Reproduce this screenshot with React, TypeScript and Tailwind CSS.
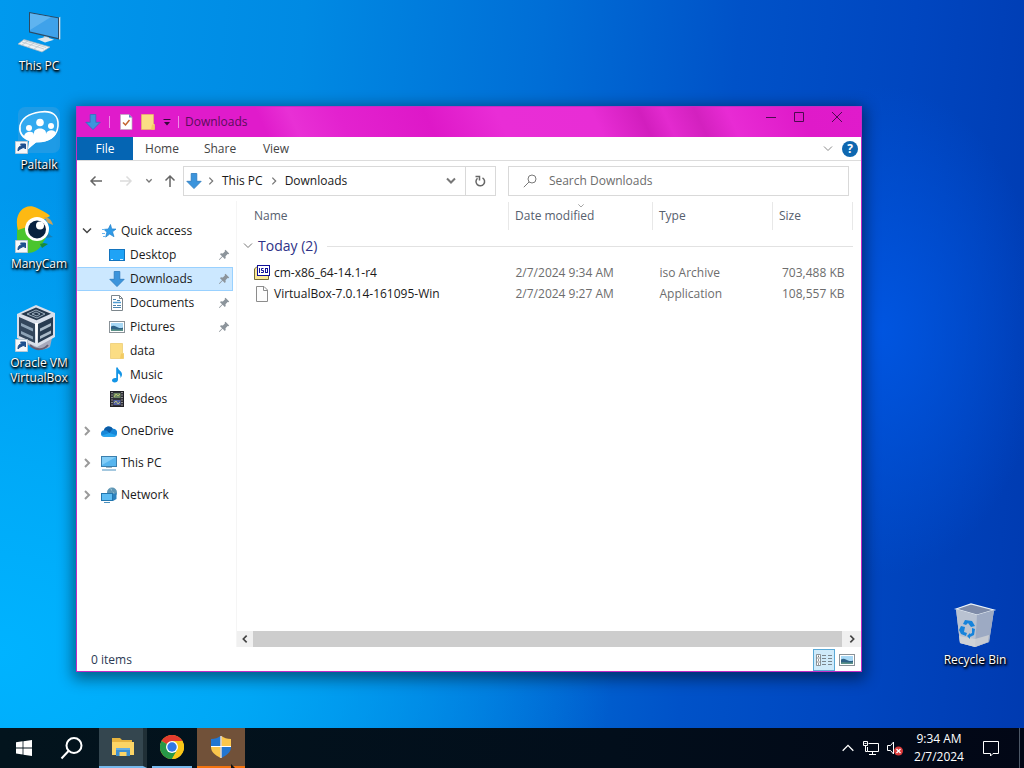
import type { ReactNode } from "react";

type IconProps = { className?: string };

/* ---------- small glyphs ---------- */

function Chevron({ dir, className = "" }: { dir: "down" | "right" | "left" | "up"; className?: string }) {
  const d = {
    down: "M2 3.5 6 7.5 10 3.5",
    right: "M4 2 8 6 4 10",
    left: "M8 2 4 6 8 10",
    up: "M2 8 6 4 10 8",
  }[dir];
  return (
    <svg viewBox="0 0 12 12" fill="none" stroke="currentColor" className={className}>
      <path d={d} />
    </svg>
  );
}

function DownloadArrow({ className = "" }: IconProps) {
  return (
    <svg viewBox="0 0 16 16" className={className}>
      <path d="M5.2.5h5.6v7.8h4.4L8 15.6.8 8.3h4.4z" fill="#3b94dc" stroke="#2878bd" strokeWidth=".8" />
    </svg>
  );
}

function FolderIcon({ className = "" }: IconProps) {
  return (
    <svg viewBox="0 0 16 16" className={className}>
      <path d="M1.5.5h12v9l1 1v5h-13z" fill="#fbdd84" stroke="#e8c35c" strokeWidth=".6" />
      <path d="M12 10.5h2.5v5H11z" fill="#f3cb62" />
    </svg>
  );
}

function CheckPageIcon({ className = "" }: IconProps) {
  return (
    <svg viewBox="0 0 16 16" className={className}>
      <path d="M2.5.5h8.5l3 3v12H2.500z" fill="#fff" stroke="#b9b0bd" strokeWidth=".7" />
      <path d="M11 .5v3h3z" fill="#5b86c4" />
      <path d="m5 8.500 2.500 2.500 4-5" fill="none" stroke="#c4642d" strokeWidth="1.500" />
    </svg>
  );
}

function StarIcon({ className = "" }: IconProps) {
  return (
    <svg viewBox="0 0 16 16" className={className}>
      <path d="m9.500 1.500 1.200 4.400 4.300.2-3.500 2.700 1.500 4.900-4.300-2.600-4 3 1.200-4.900L3 6.400l4.300-.4z" fill="#2f9be8" stroke="#1f7fca" strokeWidth=".7" />
      <path d="M1 6.500h3M1 10.500h3M2 13.500h2" stroke="#6bb6ee" />
    </svg>
  );
}

function DesktopIcon({ className = "" }: IconProps) {
  return (
    <svg viewBox="0 0 16 16" className={className}>
      <rect x=".5" y="2.500" width="15" height="11" fill="#1fa3f6" stroke="#1374be" />
      <path d="M2 12.500h2M11 12.500h3" stroke="#d6efff" />
    </svg>
  );
}

function DocumentIcon({ className = "" }: IconProps) {
  return (
    <svg viewBox="0 0 16 16" className={className}>
      <path d="M2.500.5h8l3 3v12h-11z" fill="#fff" stroke="#7d868c" />
      <path d="M10.500.5v3h3" fill="none" stroke="#7d868c" />
      <path d="M4 4.500h3M8 5.500h3M4 10.500h3M4 12.500h8M8 10.500h4" stroke="#4b84ae" />
      <path d="M4 7.500h8" stroke="#4f9bd0" strokeWidth="1.500" />
    </svg>
  );
}

function PictureIcon({ className = "" }: IconProps) {
  return (
    <svg viewBox="0 0 16 16" className={className}>
      <rect x=".5" y="2.500" width="15" height="11" fill="#fff" stroke="#8a9298" />
      <path d="M2 4h12v8H2z" fill="#a8d8f5" />
      <path d="M2 7.500c3-2 5 0 7 1s4 .5 5 0V12H2z" fill="#2f6286" />
      <path d="M2 10.500c4-1 8 1 12-.5V12H2z" fill="#5c9389" />
    </svg>
  );
}

function MusicIcon({ className = "" }: IconProps) {
  return (
    <svg viewBox="0 0 16 16" className={className}>
      <path d="M7.200.5h1.600c.3 3 4.200 3.500 4.200 7 0 1.600-.8 2.700-1.600 3.500.5-2.700-.8-4-2.400-4.500v6c0 1.900-1.500 3-3.300 3S3 14.600 3 13.300c0-1.600 1.900-2.800 4.200-2.300z" fill="#1495e6" />
    </svg>
  );
}

function VideoIcon({ className = "" }: IconProps) {
  return (
    <svg viewBox="0 0 16 16" className={className}>
      <rect x="1.500" y=".5" width="13" height="15" fill="#303138" stroke="#202025" />
      <path d="M3 1v14M13 1v14" stroke="#e6e6e0" strokeDasharray="1 1.500" />
      <path d="M4.500 2h7v5h-7z" fill="#6d8763" />
      <path d="M4.500 9h7v5h-7z" fill="#5764a5" />
      <path d="m5 6 2-3 2 2 2-2M5 12l2-2 2 3 2-2" fill="none" stroke="#c9cf72" strokeWidth=".8" />
    </svg>
  );
}

function OneDriveIcon({ className = "" }: IconProps) {
  return (
    <svg viewBox="0 0 16 16" className={className}>
      <path d="M0 10.500A3.300 3.300 0 0 1 3 7.200 4.800 4.800 0 0 1 11.800 5.800 3.800 3.800 0 0 1 16 10.500a3.200 3.200 0 0 1-2.800 3.300H3.200A3.300 3.300 0 0 1 0 10.500" fill="#1787d8" />
      <path d="M3 7.200A4.800 4.800 0 0 1 11.800 5.800L8.500 10 5.500 7.600z" fill="#0c5ca6" />
      <path d="m8.500 10 7 2.300a3.200 3.200 0 0 1-2.300 1.500H3.200c-1 0-2-.5-2.500-1.200z" fill="#25a5ef" />
    </svg>
  );
}

function MonitorIcon({ className = "" }: IconProps) {
  return (
    <svg viewBox="0 0 16 16" className={className}>
      <rect x=".5" y="1.500" width="15" height="10" fill="#57b5ee" stroke="#3b7fad" />
      <path d="M1 2h14L1 10z" fill="#83cdf7" />
      <path d="M5 12.500h6" stroke="#9fb4c1" />
      <path d="M1 15h14" stroke="#4b91bf" />
    </svg>
  );
}

function NetworkIcon({ className = "" }: IconProps) {
  return (
    <svg viewBox="0 0 16 16" className={className}>
      <circle cx="11" cy="5.500" r="5" fill="#5f96b5" />
      <path d="M9 1.500c3 0 1 2.500 3 3.500s1 2 2 3z" fill="#a9cfdc" />
      <path d="m12 7 3.500-1v6L12 14z" fill="#2c81bd" />
      <rect x=".5" y="6.500" width="11" height="7" fill="#5dbcf3" stroke="#2376ae" />
      <path d="M3 15.500h6" stroke="#4b91bf" />
    </svg>
  );
}

function PinIcon({ className = "" }: IconProps) {
  return (
    <svg viewBox="0 0 12 12" className={className}>
      <path d="M7.500.8 11.200 4.500l-.8.800-.8-.2L7.500 7.200l.2 1.900-.9.900-2.200-2.300L1.500 11l-.6-.5 3.200-3.200L2 5.200l.9-.9 1.900.2L6.900 2.400l-.2-.8z" fill="#8c949b" />
    </svg>
  );
}

function IsoIcon({ className = "" }: IconProps) {
  return (
    <svg viewBox="0 0 16 16" className={className}>
      <path d="M.5 4 2.500 2H5v8.500h9.500v4H.5z" fill="#fbe894" stroke="#736a3b" />
      <rect x="3.500" y=".5" width="12" height="10" fill="#fff" stroke="#10109a" />
      <path d="M5.500 3v5M9.500 3.500H7.500v2h2v2h-2.500" fill="none" stroke="#10109a" />
      <rect x="11.500" y="3.500" width="2" height="4" fill="none" stroke="#10109a" />
    </svg>
  );
}

function BlankFileIcon({ className = "" }: IconProps) {
  return (
    <svg viewBox="0 0 16 16" className={className}>
      <path d="M2.500.5H10L13.500 4v11.500h-11z" fill="#fdfdfd" stroke="#8c8c8c" />
      <path d="M9.500.5v4h4" fill="none" stroke="#8c8c8c" />
    </svg>
  );
}

function DetailsViewIcon({ className = "" }: IconProps) {
  return (
    <svg viewBox="0 0 18 14" className={className}>
      <path d="M1.500 1.500h4v11h-4zM1.500 5h4M1.500 9h4" fill="#fff" stroke="#737b80" strokeWidth=".8" />
      <path d="M3 3.200h1M3 7h1M3 11h1" stroke="#333" />
      <path d="M7 2.500h4M13 2.500h4M7 5.500h4M13 5.500h4M7 8.500h4M13 8.500h4M7 11.500h4M13 11.500h4" stroke="#7b868e" />
    </svg>
  );
}

/* ---------- desktop drawings ---------- */

function ShortcutBadge() {
  return (
    <g>
      <path d="M.5 34.500h12v12H.5z" fill="#f6f8fa" stroke="#b9c8d4" />
      <path d="M3 44c0-4 1.500-5 4-5.300L5.500 37H10.500v5L9 40.500C6.500 41 5 42 3 44" fill="#1c4f8e" stroke="#1c4f8e" />
    </g>
  );
}

function ThisPcDrawing() {
  return (
    <svg viewBox="0 0 48 48" className="h-12 w-12">
      <path d="M14 4 44 9.500v22L14 24.500z" fill="#2c4a63" />
      <path d="M15 5.200 43 10.300v19.800L15 23.500z" fill="#3fa2ea" />
      <path d="M15 5.200 36 9 15 22z" fill="#74c0f3" opacity=".6" />
      <path d="m44 9.500 1.300-.7v22.400l-1.300.3z" fill="#d9e0e4" />
      <path d="m29 28 5 1.200v3.300l-6-1.500z" fill="#aab6bf" />
      <path d="m22 31 9-2 8 2.800-9 2.700z" fill="#dfe7ec" />
      <path d="m9 31.500 26 7.500-8 5L3 36z" fill="#eef2f4" stroke="#a5b5c0" strokeWidth=".7" />
      <path d="m7 34 22 7M9 32.500l22 7M13 33l-6 4M19 35l-6 4M25 37l-6 4" stroke="#b6c3cc" strokeWidth=".7" />
    </svg>
  );
}

function PaltalkDrawing() {
  return (
    <svg viewBox="0 0 48 48" className="h-12 w-12">
      <rect x="3" width="42" height="46" rx="7" fill="#1e9be6" />
      <path d="M25 5C38 3 44 9 43 19c-1 11-10 16-22 15.500l-7 6 1-7C8 31 4 26 5 19 7 10 15 6.500 25 5z" fill="#33aaf0" stroke="#fff" strokeWidth="1.600" />
      <g fill="#fff">
        <circle cx="14" cy="21" r="3" />
        <circle cx="25" cy="15.500" r="3.800" />
        <circle cx="36" cy="19" r="3" />
        <path d="M9 30c0-6 10-7 10-2v-2c0-6 12-6 12 0v1c1-5 10-5 10 0-3 5-9 8-20 8.500l-7 5 1-7c-3-1-5-2-6-3.500" />
      </g>
      <ShortcutBadge />
    </svg>
  );
}

function ManyCamDrawing() {
  return (
    <svg viewBox="0 0 48 48" className="h-12 w-12">
      <path d="M2 16v22c0 12 20 12 25 0l7-11z" fill="#4ac52e" />
      <path d="m25 38 4-1 4 1-6 4z" fill="#198b3a" />
      <path d="M3 24C-2 7 10-4 22 2c5 3 11 5 13 8l-14 8z" fill="#fdb913" />
      <path d="M29 11c5 0 8 4 9 8l-5-2z" fill="#c9a35a" />
      <path d="M31 25c3 2 4 5 7 6l-7 1z" fill="#197eb0" />
      <circle cx="22" cy="23" r="12" fill="#fff" />
      <circle cx="22" cy="23.500" r="9" fill="#08213f" />
      <circle cx="25" cy="19.500" r="4" fill="#fff" />
      <ShortcutBadge />
    </svg>
  );
}

function VirtualBoxDrawing() {
  return (
    <svg viewBox="0 0 48 48" className="h-12 w-12">
      <path d="M12 38c4 6 14 9 23 4l2-9H12z" fill="#a7a9bc" />
      <path d="M15 40c6 6 14 5 18 0" fill="none" stroke="#665f74" strokeWidth="2" />
      <path d="M21 0 40 8v24L22 42 2 33V9z" fill="#d9dfea" />
      <path d="m21 2.500 15 6.200-14.500 6.600L6 9z" fill="#26384c" />
      <path d="m12 9 9-4 9 4-8 4zM17 9l4-2 4 2-3 2z" fill="none" stroke="#9aacbc" />
      <path d="m4 12 16 7v19L4 31z" fill="#33465c" />
      <path d="m23 19 15-7v18l-15 8z" fill="#283b50" />
      <path d="m6 18 12 5.500v3L6 21zM6 26l12 5.500v3L6 29z" fill="#8ea3b7" />
      <path d="m25 23.500 11-5.500v3l-11 5.500zM25 31l11-5.500v3L25 34z" fill="#a9b9c7" />
      <path d="m20 18 1.500 23 1.500-23z" fill="#fff" />
      <ShortcutBadge />
    </svg>
  );
}

function RecycleDrawing() {
  return (
    <svg viewBox="0 0 48 48" className="h-12 w-12">
      <path d="m5 7 15-5 23 6-5 32-14 5-15-4z" fill="#c5cedc" />
      <path d="m5 7 15-5 23 6-17 5z" fill="#7e8ba8" stroke="#e9f1f7" strokeWidth="1.200" />
      <path d="m5 7 21 6-1 32-16-4z" fill="#b9c2d1" />
      <path d="m26 13 17-5-5 32-14 5z" fill="#9daac3" />
      <path d="m8 34 16 3 14-4-1 7-13 5-15-4z" fill="#d8d8d8" opacity=".7" />
      <g fill="#1683db">
        <path d="m14 18 7 1 3 5-4 1-3-4-2 2-3-1z" />
        <path d="m10 24 4 1-1 5 3 1-1 3-5-2-2-4z" />
        <path d="m21 26 3 1-1 6-4 2v2l-3-3 3-3v1l2-1z" />
      </g>
    </svg>
  );
}

function DesktopShortcut({ label, children }: { label: string; children: ReactNode }) {
  return (
    <button className="flex h-[99px] w-[78px] flex-col items-center gap-0.5 text-xs leading-[15px] text-white [text-shadow:1px_1px_2px_#000,0_1px_2px_#000,1px_2px_3px_#000]">
      {children}
      <span>{label}</span>
    </button>
  );
}

/* ---------- explorer window ---------- */

const quickAccess = [
  { name: "Desktop", icon: DesktopIcon, pinned: true },
  { name: "Downloads", icon: DownloadArrow, pinned: true },
  { name: "Documents", icon: DocumentIcon, pinned: true },
  { name: "Pictures", icon: PictureIcon, pinned: true },
  { name: "data", icon: FolderIcon, pinned: false },
  { name: "Music", icon: MusicIcon, pinned: false },
  { name: "Videos", icon: VideoIcon, pinned: false },
];

const roots = [
  { name: "OneDrive", icon: OneDriveIcon },
  { name: "This PC", icon: MonitorIcon },
  { name: "Network", icon: NetworkIcon },
];

const files = [
  { name: "cm-x86_64-14.1-r4", icon: IsoIcon, date: "2/7/2024 9:34 AM", type: "iso Archive", size: "703,488 KB" },
  { name: "VirtualBox-7.0.14-161095-Win", icon: BlankFileIcon, date: "2/7/2024 9:27 AM", type: "Application", size: "108,557 KB" },
];

function TitleBar() {
  return (
    <header className="flex h-[30px] shrink-0 items-center bg-[linear-gradient(65deg,#e01bcb_0%,#e01bcb_24%,#e830d5_28%,#e322cf_34%,#de18c8_45%,#e92dd6_54%,#e82dd5_66%,#d21ebe_72%,#e32acf_75%,#d321bf_79%,#e82bd4_83%,#df1ac9_92%,#e01bcb_100%)] text-[#5b0d5b]">
      <DownloadArrow className="ml-2 h-4 w-4" />
      <span className="ml-2 h-3 w-px bg-[#ef8be7]" />
      <button aria-label="Properties" className="ml-2">
        <CheckPageIcon className="h-4 w-4" />
      </button>
      <button aria-label="New folder" className="ml-1.5">
        <FolderIcon className="h-4 w-4" />
      </button>
      <button aria-label="Customize toolbar" className="ml-1.5">
        <svg viewBox="0 0 10 10" className="h-2.5 w-2.5">
          <path d="M1.500 2.500h7" stroke="#35083a" />
          <path d="M2 5h6L5 8.500z" fill="#35083a" />
        </svg>
      </button>
      <span className="ml-1.5 h-3 w-px bg-[#ef8be7]" />
      <h1 className="ml-1.5 flex-1 text-xs">Downloads</h1>
      <div className="flex h-5 self-start text-[#4d0a50]">
        <button aria-label="Minimize" className="flex w-7 items-center justify-center">
          <svg viewBox="0 0 12 12" className="h-3 w-3"><path d="M1 6.500h10" stroke="currentColor" /></svg>
        </button>
        <button aria-label="Maximize" className="flex w-7 items-center justify-center">
          <svg viewBox="0 0 12 12" className="h-3 w-3"><path d="M1.500 1.500h9v9h-9z" fill="none" stroke="currentColor" /></svg>
        </button>
        <button aria-label="Close" className="flex w-12 items-center justify-center">
          <svg viewBox="0 0 12 12" className="h-3 w-3"><path d="m1 1 10 10M11 1 1 11" stroke="currentColor" /></svg>
        </button>
      </div>
    </header>
  );
}

function Ribbon() {
  return (
    <div className="flex h-6 shrink-0 items-center border-b border-[#dcdcdc] text-xs text-[#444]">
      <button className="h-full w-14 bg-[#0565b3] text-white">File</button>
      <button className="h-full w-[58px]">Home</button>
      <button className="h-full w-[58px]">Share</button>
      <button className="h-full w-[54px]">View</button>
      <button aria-label="Expand ribbon" className="ml-auto text-[#8a8a8a]">
        <Chevron dir="down" className="h-3 w-3" />
      </button>
      <button aria-label="Help" className="mr-[3px] ml-2 flex h-4 w-4 items-center justify-center rounded-full bg-[#0e67b0] font-bold text-white">
        ?
      </button>
    </div>
  );
}

function AddressRow() {
  return (
    <div className="flex h-10 shrink-0 items-center px-3 text-xs">
      <button aria-label="Back" className="text-[#666]">
        <svg viewBox="0 0 14 14" className="h-3.5 w-3.5" fill="none" stroke="currentColor" strokeWidth="1.500"><path d="M13 7H2M6.500 2.500 2 7l4.500 4.500" /></svg>
      </button>
      <button aria-label="Forward" className="ml-4 text-[#dcdcdc]">
        <svg viewBox="0 0 14 14" className="h-3.5 w-3.5" fill="none" stroke="currentColor" strokeWidth="1.500"><path d="M1 7h11M7.500 2.500 12 7l-4.500 4.500" /></svg>
      </button>
      <button aria-label="Recent locations" className="ml-3 text-[#777]">
        <Chevron dir="down" className="h-2 w-2 stroke-2" />
      </button>
      <button aria-label="Up" className="ml-2.5 text-[#666]">
        <svg viewBox="0 0 14 14" className="h-3.5 w-3.5" fill="none" stroke="currentColor" strokeWidth="1.500"><path d="M7 13V2M2.500 6.500 7 2l4.500 4.500" /></svg>
      </button>
      <div className="ml-1.5 flex h-[30px] flex-[11] items-center border border-[#d9d9d9] text-[#1a1a1a]">
        <DownloadArrow className="ml-0.5 h-[18px] w-4" />
        <Chevron dir="right" className="ml-1 h-2.5 w-2.5 stroke-[1.5] text-[#777]" />
        <button className="ml-1.5">This PC</button>
        <Chevron dir="right" className="ml-1.5 h-2.5 w-2.5 stroke-[1.5] text-[#777]" />
        <button className="ml-1.5">Downloads</button>
        <button aria-label="Previous locations" className="mr-2 ml-auto text-[#777]">
          <Chevron dir="down" className="h-3 w-3 stroke-2" />
        </button>
        <button aria-label="Refresh" className="flex h-full w-[30px] items-center justify-center border-l border-[#d9d9d9] text-[#666]">
          <svg viewBox="0 0 14 14" className="h-3.5 w-3.5" fill="none" stroke="currentColor" strokeWidth="1.500"><path d="M9.500 3.800A4.300 4.300 0 1 1 4.500 4.200M2.500 2.500h4v4" /></svg>
        </button>
      </div>
      <label className="ml-3 flex h-[30px] flex-[12] items-center border border-[#d9d9d9] text-[#7a7a7a]">
        <svg viewBox="0 0 14 14" className="ml-3.5 h-3.5 w-3.5 shrink-0" fill="none" stroke="currentColor"><circle cx="9" cy="5" r="4" /><path d="M6 8 .8 13.200" /></svg>
        <input type="search" aria-label="Search Downloads" placeholder="Search Downloads" className="ml-3 w-full min-w-0 outline-none placeholder:text-[#6d6d6d]" />
      </label>
    </div>
  );
}

function NavPane() {
  return (
    <nav className="w-[156px] shrink-0 pt-[18px] text-xs text-[#1a1a1a]">
      <div className="flex h-6 items-center">
        <button aria-label="Collapse Quick access" className="ml-1 text-[#444]">
          <Chevron dir="down" className="h-3 w-3 stroke-[1.5]" />
        </button>
        <button className="ml-2 flex items-center gap-1">
          <StarIcon className="h-4 w-4" />
          Quick access
        </button>
      </div>
      <ul>
        {quickAccess.map(({ name, icon: Icon, pinned }) => (
          <li key={name}>
            <button
              className={`flex h-6 w-full items-center border pr-0.5 pl-[31px] ${
                name === "Downloads" ? "border-[#99d1ff] border-l-transparent bg-[#cce8ff]" : "border-transparent"
              }`}
            >
              <Icon className="mr-[5px] h-4 w-4 shrink-0" />
              {name}
              {pinned && <PinIcon className="ml-auto h-3 w-3" />}
            </button>
          </li>
        ))}
      </ul>
      {roots.map(({ name, icon: Icon }) => (
        <div key={name} className="mt-2 flex h-6 items-center">
          <button aria-label={`Expand ${name}`} className="ml-1 text-[#9a9a9a]">
            <Chevron dir="right" className="h-3 w-3 stroke-2" />
          </button>
          <button className="ml-2 flex items-center gap-1">
            <Icon className="h-4 w-4" />
            {name}
          </button>
        </div>
      ))}
    </nav>
  );
}

function FileList() {
  return (
    <main className="flex min-w-0 flex-1 flex-col">
      <table className="mt-px mr-2 table-fixed text-left text-xs text-[#6d6d6d]">
        <thead>
          <tr className="h-7 text-[#56606e] [&>th]:font-normal">
            <th className="pl-[17px]">Name</th>
            <th className="relative w-36 border-l border-[#e8e8e8] pl-1.5">
              <Chevron dir="down" className="absolute top-0 left-[68px] h-2 w-2 text-[#777]" />
              Date modified
            </th>
            <th className="w-[120px] border-l border-[#e8e8e8] pl-1.5">Type</th>
            <th className="w-20 border-x border-[#e8e8e8] pl-1.5">Size</th>
          </tr>
        </thead>
        <tbody>
          <tr>
            <td colSpan={4} className="h-8">
              <div className="flex items-center">
                <button className="flex items-center gap-1 pl-[5px] text-sm text-[#2e3287]">
                  <Chevron dir="down" className="h-3 w-3 text-[#777]" />
                  Today (2)
                </button>
                <span className="ml-2.5 h-px flex-1 bg-[#e2e2e2]" />
              </div>
            </td>
          </tr>
          {files.map(({ name, icon: Icon, date, type, size }) => (
            <tr key={name} className="h-[21px]">
              <td className="pl-[17px]">
                <span className="flex items-center gap-1 text-[#1a1a1a]">
                  <Icon className="h-4 w-4" />
                  {name}
                </span>
              </td>
              <td className="pl-[7px]">{date}</td>
              <td className="pl-[7px]">{type}</td>
              <td className="pr-2 text-right whitespace-nowrap">{size}</td>
            </tr>
          ))}
        </tbody>
      </table>
      <div className="mt-auto flex h-4 items-center bg-[#f0f0f0] text-[#444]">
        <button aria-label="Scroll left" className="flex w-4 justify-center">
          <Chevron dir="left" className="h-2.5 w-2.5 stroke-2" />
        </button>
        <div className="h-full flex-1 bg-[#cdcdcd]" />
        <button aria-label="Scroll right" className="flex w-[19px] justify-center">
          <Chevron dir="right" className="h-2.5 w-2.5 stroke-2" />
        </button>
      </div>
    </main>
  );
}

function ExplorerWindow() {
  return (
    <section className="absolute top-[106px] right-[162px] bottom-14 left-[76px] flex flex-col border border-[#c22cc4] bg-white shadow-[0_4px_14px_3px_rgba(0,0,0,0.45)]">
      <TitleBar />
      <Ribbon />
      <AddressRow />
      <div className="flex min-h-0 flex-1">
        <NavPane />
        <div className="w-1 shrink-0 border-r border-[#f5f5f5]" />
        <FileList />
      </div>
      <footer className="flex h-6 shrink-0 items-end gap-1 pr-1.5 pl-3.5 text-xs leading-[22px] text-[#2b3a55]">
        <span>0 items</span>
        <button aria-label="Details view" className="ml-auto flex h-[22px] w-[22px] items-center justify-center border border-[#5aa9d6] bg-[#cfeafa]">
          <DetailsViewIcon className="h-3.5 w-[18px]" />
        </button>
        <button aria-label="Large icons view" className="flex h-[22px] items-center">
          <PictureIcon className="h-4 w-4" />
        </button>
      </footer>
    </section>
  );
}

/* ---------- taskbar ---------- */

function Taskbar() {
  return (
    <footer className="flex h-10 shrink-0 items-stretch bg-[linear-gradient(90deg,#03141d,#020e1b_60%,#020716)] text-white">
      <button aria-label="Start" className="flex w-12 items-center justify-center">
        <svg viewBox="0 0 16 16" className="h-4 w-4" fill="#fff">
          <path d="M0 2.300 6.600 1.300v6.200H0zM7.400 1.200 16 0v7.500H7.400zM0 8.400h6.600v6.200L0 13.600zM7.400 8.400H16V16l-8.600-1.300z" />
        </svg>
      </button>
      <button aria-label="Search" className="mr-[3px] flex w-12 items-center justify-center">
        <svg viewBox="0 0 24 24" className="h-6 w-6" fill="none" stroke="#fff" strokeWidth="2">
          <circle cx="14" cy="9.500" r="7.500" />
          <path d="m8.500 15-7 7.500" />
        </svg>
      </button>
      <button aria-label="File Explorer" className="mr-px flex w-12 items-center justify-center border-r-4 border-b-2 border-r-[#202f36] border-b-[#76b9ed] bg-[#34464f]">
        <svg viewBox="0 0 24 20" className="ml-1 h-5 w-6">
          <path d="M1 1h8l2 2h10v4H1z" fill="#e8b43f" />
          <path d="M1 5h22v13H1z" fill="#fcd566" />
          <path d="M5 11h14v8H5z" fill="#3d8fd0" />
          <path d="M8.500 15h7v4h-7z" fill="#fcd566" />
          <path d="M5 11h14v2H5z" fill="#66aee1" />
        </svg>
      </button>
      <button aria-label="Google Chrome" className="mx-1 flex w-10 items-center justify-center border-b-2 border-[#76b9ed]">
        <svg viewBox="0 0 24 24" className="h-6 w-6">
          <circle cx="12" cy="12" r="12" fill="#fbc618" />
          <path d="M12 12 1.600 6A12 12 0 0 1 22.400 6z" fill="#e33b2e" />
          <path d="M12 12 1.600 6A12 12 0 0 0 12 24l5.200-9z" fill="#279847" />
          <path d="M12 6h10.400A12 12 0 0 1 12 24l5.200-9z" fill="#fbc618" />
          <circle cx="12" cy="12" r="6" fill="#fff" />
          <circle cx="12" cy="12" r="4.700" fill="#3178e6" />
        </svg>
      </button>
      <button aria-label="Administrator prompt" className="relative ml-px flex w-12 items-center justify-center border-b-2 border-[#f4730f] bg-[#715139]">
        <svg viewBox="0 0 20 22" className="h-[22px] w-5">
          <path d="M9.500 0v10H0V3c4 0 7-1 9.500-3" fill="#2276d2" />
          <path d="M10.500 0v10H20V3c-4 0-7-1-9.500-3" fill="#fbc64c" />
          <path d="M0 11h9.500v11C4 19 0 16 0 11" fill="#fbc64c" />
          <path d="M20 11h-9.500v11c5.500-3 9.500-6 9.500-11" fill="#2276d2" />
          <path d="M10 0v22M0 10.500h20" stroke="#fff" strokeWidth="1.200" />
        </svg>
        <svg viewBox="0 0 6 6" className="absolute right-2.5 -bottom-0.5 h-1 w-1"><path d="M0 0 6 6H0z" fill="#111" /></svg>
      </button>

      <div className="ml-auto flex items-center">
        <button aria-label="Show hidden icons">
          <Chevron dir="up" className="h-4 w-4" />
        </button>
        <button aria-label="Network status" className="ml-1.5">
          <svg viewBox="0 0 18 16" className="h-4 w-[18px]" fill="none" stroke="#fff">
            <path d="M6.500 3.500h10v8h-11V7M10.500 12v2.500M7 14.500h7" />
            <path d="M1.500 1.500h4v4h-4zM3.500 5.500v6h2M2.500 3.500h2" />
          </svg>
        </button>
        <button aria-label="Volume muted" className="ml-1.5">
          <svg viewBox="0 0 18 16" className="h-4 w-[18px]">
            <path d="M1.500 5.500h3L7.500 2v12l-3-3.500h-3z" fill="none" stroke="#fff" />
            <circle cx="12.500" cy="11" r="4.500" fill="#dc3b3b" />
            <path d="m10.500 9 4 4M14.500 9l-4 4" stroke="#fff" strokeWidth="1.300" />
          </svg>
        </button>
        <button className="ml-2.5 w-[50px] text-center text-xs leading-[18px] whitespace-nowrap">
          <time className="block">9:34 AM</time>
          <time className="block">2/7/2024</time>
        </button>
        <button aria-label="Notifications" className="ml-[18px]">
          <svg viewBox="0 0 18 18" className="h-[18px] w-[18px]" fill="none" stroke="#fff">
            <path d="M1.500 2.500h15v12H11l-2.500 2.500v-2.500h-7z" />
          </svg>
        </button>
        <button aria-label="Show desktop" className="ml-[19px] h-10 w-[5px] border-l border-[#4d5867]" />
      </div>
    </footer>
  );
}

export default function App() {
  return (
    <div className="flex h-screen min-h-[480px] flex-col overflow-hidden bg-[radial-gradient(ellipse_60%_60%_at_0%_85%,#00b3ff_0%,#00aefad0_40%,transparent_100%),radial-gradient(ellipse_16%_32%_at_86%_43%,#0055e0_0%,transparent_100%),linear-gradient(95deg,#0099ee_0%,#008ae3_28%,#006ed6_50%,#0052c8_68%,#0046c0_84%,#003ab0_100%)] font-['Open_Sans','Noto_Sans',sans-serif]">
      <div className="relative flex flex-1 items-start justify-between pt-2">
        <div className="flex flex-col">
          <DesktopShortcut label="This PC"><ThisPcDrawing /></DesktopShortcut>
          <DesktopShortcut label="Paltalk"><PaltalkDrawing /></DesktopShortcut>
          <DesktopShortcut label="ManyCam"><ManyCamDrawing /></DesktopShortcut>
          <DesktopShortcut label="Oracle VM VirtualBox"><VirtualBoxDrawing /></DesktopShortcut>
        </div>
        <div className="mr-2.5 mb-[27px] self-end">
          <DesktopShortcut label="Recycle Bin"><RecycleDrawing /></DesktopShortcut>
        </div>
        <ExplorerWindow />
      </div>
      <Taskbar />
    </div>
  );
}
